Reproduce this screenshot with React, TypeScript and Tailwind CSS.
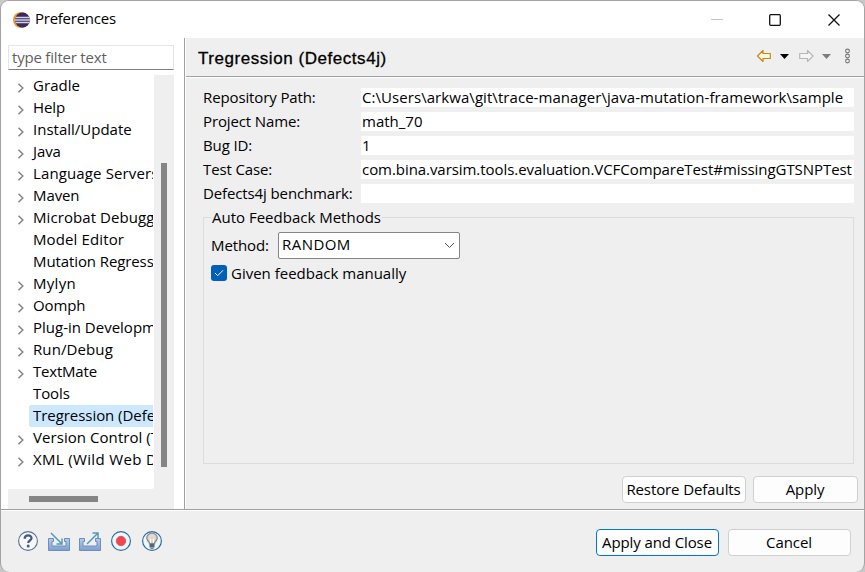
import type { ReactNode } from 'react';

type TreeItem = { label: string; leaf?: boolean; selected?: boolean; tracking?: string };

const items: TreeItem[] = [
  { label: 'Gradle', tracking: 'tracking-[0.05px]' },
  { label: 'Help' },
  { label: 'Install/Update', tracking: 'tracking-[0px]' },
  { label: 'Java' },
  { label: 'Language Servers', tracking: 'tracking-[0.13px]' },
  { label: 'Maven' },
  { label: 'Microbat Debugging', tracking: 'tracking-[0.08px]' },
  { label: 'Model Editor', leaf: true, tracking: 'tracking-[0.12px]' },
  { label: 'Mutation Regression', leaf: true },
  { label: 'Mylyn', tracking: 'tracking-[0.3px]' },
  { label: 'Oomph' },
  { label: 'Plug-in Development', tracking: 'tracking-[0px]' },
  { label: 'Run/Debug', tracking: 'tracking-[0.1px]' },
  { label: 'TextMate', tracking: 'tracking-[-0.2px]' },
  { label: 'Tools', leaf: true },
  { label: 'Tregression (Defects4j)', leaf: true, selected: true, tracking: 'tracking-[-0.05px]' },
  { label: 'Version Control (Team)', tracking: 'tracking-[0.06px]' },
  { label: 'XML (Wild Web Developer)', tracking: 'tracking-[0.34px]' },
];

const fields = [
  {
    label: 'Repository Path:',
    value: 'C:\\Users\\arkwa\\git\\trace-manager\\java-mutation-framework\\sample',
    tracking: 'tracking-[0.06px]',
  },
  { label: 'Project Name:', value: 'math_70' },
  { label: 'Bug ID:', value: '1' },
  {
    label: 'Test Case:',
    value: 'com.bina.varsim.tools.evaluation.VCFCompareTest#missingGTSNPTest',
    tracking: 'tracking-[-0.06px]',
  },
  { label: 'Defects4j benchmark:', value: '' },
];

function EclipseLogo() {
  return (
    <svg width="19" height="18" viewBox="0 0 19 18" className="shrink-0">
      <circle cx="9" cy="9" r="8" fill="#f0952c" />
      <circle cx="10.500" cy="9" r="7.500" fill="#352c60" />
      <path d="M3.500 6.500h14M2.800 9h15.700M3.500 11.500h14" stroke="#d5d2e4" strokeWidth="1.300" />
    </svg>
  );
}

function TitleBar() {
  return (
    <div className="flex h-[37px] shrink-0 items-center bg-white pl-[11px]">
      <EclipseLogo />
      <span className="ml-1 flex-1 pb-0.5 text-[15px] tracking-[-0.25px]">Preferences</span>
      <svg width="153" height="36" viewBox="0 0 153 36" fill="none">
        <path d="M0 17.500h12" stroke="#c6c6c6" />
        <rect x="58.700" y="12.700" width="10.600" height="10.600" rx="1" stroke="#111" strokeWidth="1.300" />
        <path d="M117.500 12.500l11 11M128.500 12.500l-11 11" stroke="#111" strokeWidth="1.300" />
      </svg>
    </div>
  );
}

function TreeRow({ item }: { item: TreeItem }) {
  return (
    <div className="flex h-[22px] items-center whitespace-nowrap">
      <span className="flex w-[21px] shrink-0 justify-center pl-[5px] pt-[3px]">
        {!item.leaf && (
          <svg width="8" height="10" viewBox="0 0 8 10" fill="none">
            <path d="M1.500 .7L5.800 5L1.500 9.300" stroke="#858585" strokeWidth="1.500" />
          </svg>
        )}
      </span>
      <span
        className={`h-[22px] pl-1 leading-[20px] ${item.selected ? 'rounded-l-xs bg-[#cce8ff]' : ''} ${item.tracking ?? ''}`}
      >
        {item.label}
      </span>
    </div>
  );
}

function Sidebar() {
  return (
    <div className="flex w-[183px] shrink-0 flex-col bg-white pl-[7px] pt-[7px]">
      <div className="flex h-[25px] w-[166px] items-center border border-b-[#808080] border-[#e5e5e5] pl-[3px] text-[15px] text-[#5f5f5f] tracking-[-0.2px]">
        type filter text
      </div>
      <div className="mt-[5px] flex h-[434px] w-[166px] flex-col bg-[#efefef]">
        <div className="flex h-[414px]">
          <div className="w-[146px] rounded-br-xs bg-white pr-px">
            <div className="overflow-hidden">
              {items.map((item) => (
                <TreeRow key={item.label} item={item} />
              ))}
            </div>
          </div>
          <div className="ml-[7px] mt-[88px] h-[304px] w-1.5 bg-[#858585]" />
        </div>
        <div className="ml-[21px] mt-[7px] h-1.5 w-[69px] bg-[#858585]" />
      </div>
    </div>
  );
}

function NavIcons() {
  return (
    <svg width="98" height="18" viewBox="0 0 98 18" fill="none" className="mb-0.5">
      <path d="M1.500 9L7 3.500V6.500H14.300V11.500H7V14.500Z" fill="#fff6d6" stroke="#c48a1c" strokeWidth="1.200" strokeLinejoin="round" />
      <path d="M24 7h9l-4.500 5z" fill="#000" />
      <path d="M57 9L51.500 3.500V6.500H43.700V11.500H51.500V14.500Z" fill="#f5f5f5" stroke="#b7b7b7" strokeWidth="1.200" strokeLinejoin="round" />
      <path d="M66 7h9l-4.500 5z" fill="#7d7d7d" />
      <g stroke="#777" strokeWidth="1.100">
        <circle cx="91.500" cy="4" r="1.900" />
        <circle cx="91.500" cy="9" r="1.900" />
        <circle cx="91.500" cy="14" r="1.900" />
      </g>
    </svg>
  );
}

function Button({ children, className }: { children: ReactNode; className: string }) {
  return (
    <button className={`flex h-[27px] items-center justify-center whitespace-nowrap rounded-[4px] border bg-[#fdfdfd] pr-px ${className}`}>
      {children}
    </button>
  );
}

function Page() {
  return (
    <div className="flex min-w-0 flex-1 flex-col border-l border-[#a0a0a0]">
      <div className="flex min-h-0 flex-1 flex-col border-l border-white">
        <div className="flex h-[39px] shrink-0 items-center justify-between border-b border-[#a0a0a0] pl-3 pr-2.5">
          <h1 className="pt-[3px] font-['Liberation_Sans'] text-[17px] font-normal tracking-[0.55px] [-webkit-text-stroke:0.3px_black]">
            Tregression (Defects4j)
          </h1>
          <NavIcons />
        </div>
        <div className="flex flex-1 flex-col border-t border-white pl-[17px] pt-[10px]">
          <div className="flex w-[651px] flex-col gap-[5px]">
            {fields.map((f) => (
              <div key={f.label} className="flex h-[19px] items-center whitespace-nowrap">
                <label className="w-[158px] shrink-0 tracking-[-0.12px]">{f.label}</label>
                <div className="flex h-[19px] flex-1 items-center bg-white pl-px">
                  <span className={f.tracking ?? 'tracking-[0px]'}>{f.value}</span>
                </div>
              </div>
            ))}
          </div>
          <fieldset className="mt-[5px] h-[256px] w-[651px] border border-[#dcdcdc] pl-[7px]">
            <legend className="h-[18px] px-px leading-[18px] tracking-[0px]">Auto Feedback Methods</legend>
            <div className="mt-1.5 flex h-[27px] items-center">
              <label className="w-[67px]">Method:</label>
              <div className="flex h-[27px] w-[182px] items-center justify-between rounded-xs border border-[#858585] bg-white pl-[3px] pr-1">
                <span className="pb-0.5 tracking-[0.45px]">RANDOM</span>
                <svg width="11" height="7" viewBox="0 0 11 7" fill="none">
                  <path d="M1 1l4.500 4.500L10 1" stroke="#555" />
                </svg>
              </div>
            </div>
            <div className="mt-1 flex h-5 items-center">
              <span className="flex h-4 w-4 items-center justify-center rounded-[3px] bg-[#005fb8]">
                <svg width="10" height="8" viewBox="0 0 10 8" fill="none">
                  <path d="M1 4l2.700 2.700L9 1.300" stroke="#fff" />
                </svg>
              </span>
              <span className="ml-1 tracking-[0px]">Given feedback manually</span>
            </div>
          </fieldset>
          <div className="mt-3 flex gap-[7px] pl-[419px]">
            <Button className="w-[124px] border-[#d0d0d0]">Restore Defaults</Button>
            <Button className="w-[105px] border-[#d0d0d0]">Apply</Button>
          </div>
        </div>
      </div>
    </div>
  );
}

function FooterIcons() {
  return (
    <svg width="148" height="24" viewBox="0 0 148 24" fill="none" className="shrink-0">
      <defs>
        <linearGradient id="tray" x1="0" y1="0" x2="0" y2="1">
          <stop offset="0" stopColor="#b4cde9" />
          <stop offset="1" stopColor="#7f9ecb" />
        </linearGradient>
      </defs>
      <circle cx="12" cy="12" r="9.400" fill="#f5f7fb" stroke="#5c6f90" strokeWidth="1.100" />
      <path d="M8.700 9.700C8.700 5.300 15.700 5.400 15.500 9.300C15.400 11.500 12.200 11.500 12.200 14" stroke="#455b80" strokeWidth="2.300" />
      <circle cx="12.200" cy="17" r="1.500" fill="#455b80" />
      <g id="trayShape">
        <path d="M32.500 9.500h5v3h-1.500v4.500h14v-4.500h-1.500v-3h5v12h-21z" fill="url(#tray)" stroke="#6b8dc2" />
      </g>
      <path d="M35 4l10 10M46 9.500v5.500h-5.500" stroke="#5598bc" strokeWidth="1.500" />
      <use href="#trayShape" x="31" />
      <path d="M71 15L81.500 4.500M76.500 4h5.500v5.500" stroke="#5598bc" strokeWidth="1.500" />
      <circle cx="105" cy="12" r="9.400" fill="#edf6fb" stroke="#2f6c9e" strokeWidth="1.200" />
      <circle cx="105" cy="12" r="4.700" fill="#f4444f" stroke="#d85b62" />
      <circle cx="136" cy="12" r="9.400" fill="#edf6fb" stroke="#2f6c9e" strokeWidth="1.200" />
      <path d="M133.500 14.500c0-1.800-2.700-3-2.700-5.500a5.200 4.800 0 0 1 10.400 0c0 2.500-2.700 3.700-2.700 5.500z" fill="#dedad5" stroke="#8b8580" strokeWidth="1.300" />
      <path d="M134.500 14v-4M137.500 14v-4" stroke="#fff" />
      <path d="M133.500 15h5v3.500h-5z" fill="#53647d" />
      <path d="M134.500 19.300h3" stroke="#53647d" />
    </svg>
  );
}

export default function App() {
  return (
    <div className="h-[572px] w-[865px] overflow-hidden bg-[#c8c8c8] font-['Open_Sans',sans-serif] text-[15px] tracking-[-0.1px] text-black">
      <div className="flex h-[572px] w-[865px] flex-col overflow-hidden rounded-[9px] border border-b-0 border-[#a3a3a3] bg-[#efefef]">
        <TitleBar />
        <div className="flex h-[471px] shrink-0">
          <Sidebar />
          <Page />
        </div>
        <div className="flex flex-1 items-start border-t border-[#a0a0a0]">
          <div className="flex flex-1 border-t border-white pl-[15px] pt-[18px]">
            <FooterIcons />
            <div className="ml-auto flex gap-[9px] pr-[13px]">
              <Button className="w-[123px] border-[#0078d4]">Apply and Close</Button>
              <Button className="w-[123px] border-[#d0d0d0]">Cancel</Button>
            </div>
          </div>
        </div>
      </div>
    </div>
  );
}
